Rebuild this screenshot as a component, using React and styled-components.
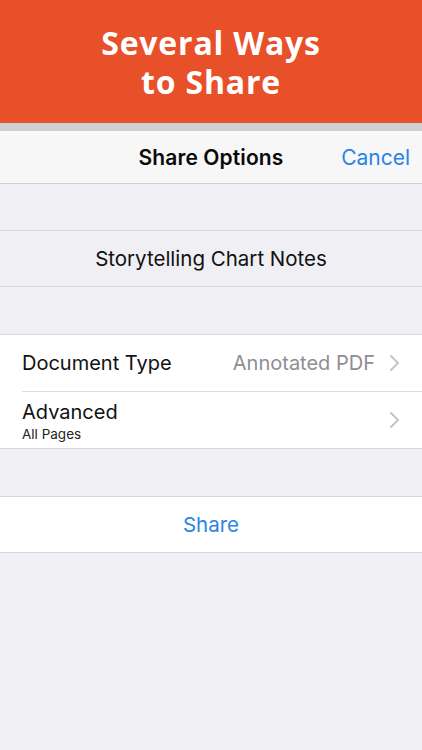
import React from "react";
import styled, { createGlobalStyle } from "styled-components";

const Global = createGlobalStyle`
  html, body { margin: 0; padding: 0; background: #efeff4; }
  body { font-family: Inter, "Noto Sans", sans-serif; -webkit-font-smoothing: antialiased; }
  * { box-sizing: border-box; }
`;

const Page = styled.div`
  width: 422px;
  min-height: 750px;
  background: #efeff4;
  display: flex;
  flex-direction: column;
`;

const Banner = styled.header`
  height: 123px;
  background: #e8502a;
  display: flex;
  align-items: center;
  justify-content: center;
  text-align: center;
  color: #fff;
  font-family: "Open Sans", sans-serif;
  font-weight: 700;
  font-size: 32px;
  line-height: 39px;
  letter-spacing: 0.8px;
  padding-top: 1px;
`;

const Strip = styled.div`
  height: 8px;
  background: #d0d0d4;
`;

const NavBar = styled.nav`
  height: 53px;
  background: #f7f7f8;
  border-bottom: 1px solid #cfcfd3;
  display: grid;
  grid-template-columns: 1fr auto 1fr;
  align-items: center;
  padding: 0 12px;
`;

const NavTitle = styled.div`
  grid-column: 2;
  font-size: 21px;
  font-weight: 600;
  color: #0a0a0a;
  letter-spacing: 0.1px;
`;

const NavButton = styled.div`
  grid-column: 3;
  justify-self: end;
  font-size: 21px;
  color: #2a84e4;
`;

const Gap = styled.div`
  height: ${(p) => p.h}px;
`;

const Group = styled.section`
  background: ${(p) => (p.plain ? "#efeff4" : "#fff")};
  border-top: 1px solid #d7d7db;
  border-bottom: 1px solid #d7d7db;
`;

const Row = styled.div`
  height: ${(p) => p.h || 56}px;
  display: flex;
  align-items: center;
  justify-content: ${(p) => (p.center ? "center" : "space-between")};
  padding: ${(p) => (p.center ? "0" : "0 22px")};
`;

const RowInset = styled.div`
  margin-left: 22px;
  border-top: 1px solid #dcdce0;
`;

const CenterText = styled.div`
  font-size: 20.5px;
  color: ${(p) => p.color || "#111"};
`;

const Labels = styled.div`
  display: flex;
  flex-direction: column;
  gap: 2px;
  padding-top: 2px;
`;

const Label = styled.div`
  font-size: 20px;
  color: #111;
  line-height: 24px;
`;

const Sub = styled.div`
  font-size: 13.5px;
  color: #222;
  line-height: 16px;
`;

const Right = styled.div`
  display: flex;
  align-items: center;
  gap: 14px;
  margin-right: 0px;
`;

const Value = styled.div`
  font-size: 20px;
  color: #8e8e93;
`;

const Chevron = () => (
  <svg width="11" height="18" viewBox="0 0 11 18" fill="none">
    <path d="M2 2l7 7-7 7" stroke="#c4c4c9" strokeWidth="2" strokeLinecap="round" strokeLinejoin="round" />
  </svg>
);

export default function App() {
  return (
    <>
      <Global />
      <Page>
        <Banner>
          Several Ways
          <br />
          to Share
        </Banner>
        <Strip />
        <NavBar>
          <NavTitle>Share Options</NavTitle>
          <NavButton>Cancel</NavButton>
        </NavBar>
        <Gap h={46} />
        <Group plain>
          <Row center h={55}>
            <CenterText>Storytelling Chart Notes</CenterText>
          </Row>
        </Group>
        <Gap h={47} />
        <Group>
          <Row h={56}>
            <Label>Document Type</Label>
            <Right>
              <Value>Annotated PDF</Value>
              <Chevron />
            </Right>
          </Row>
          <RowInset />
          <Row h={56}>
            <Labels>
              <Label>Advanced</Label>
              <Sub>All Pages</Sub>
            </Labels>
            <Right>
              <Chevron />
            </Right>
          </Row>
        </Group>
        <Gap h={47} />
        <Group>
          <Row center h={55}>
            <CenterText color="#2a84e4">Share</CenterText>
          </Row>
        </Group>
      </Page>
    </>
  );
}
